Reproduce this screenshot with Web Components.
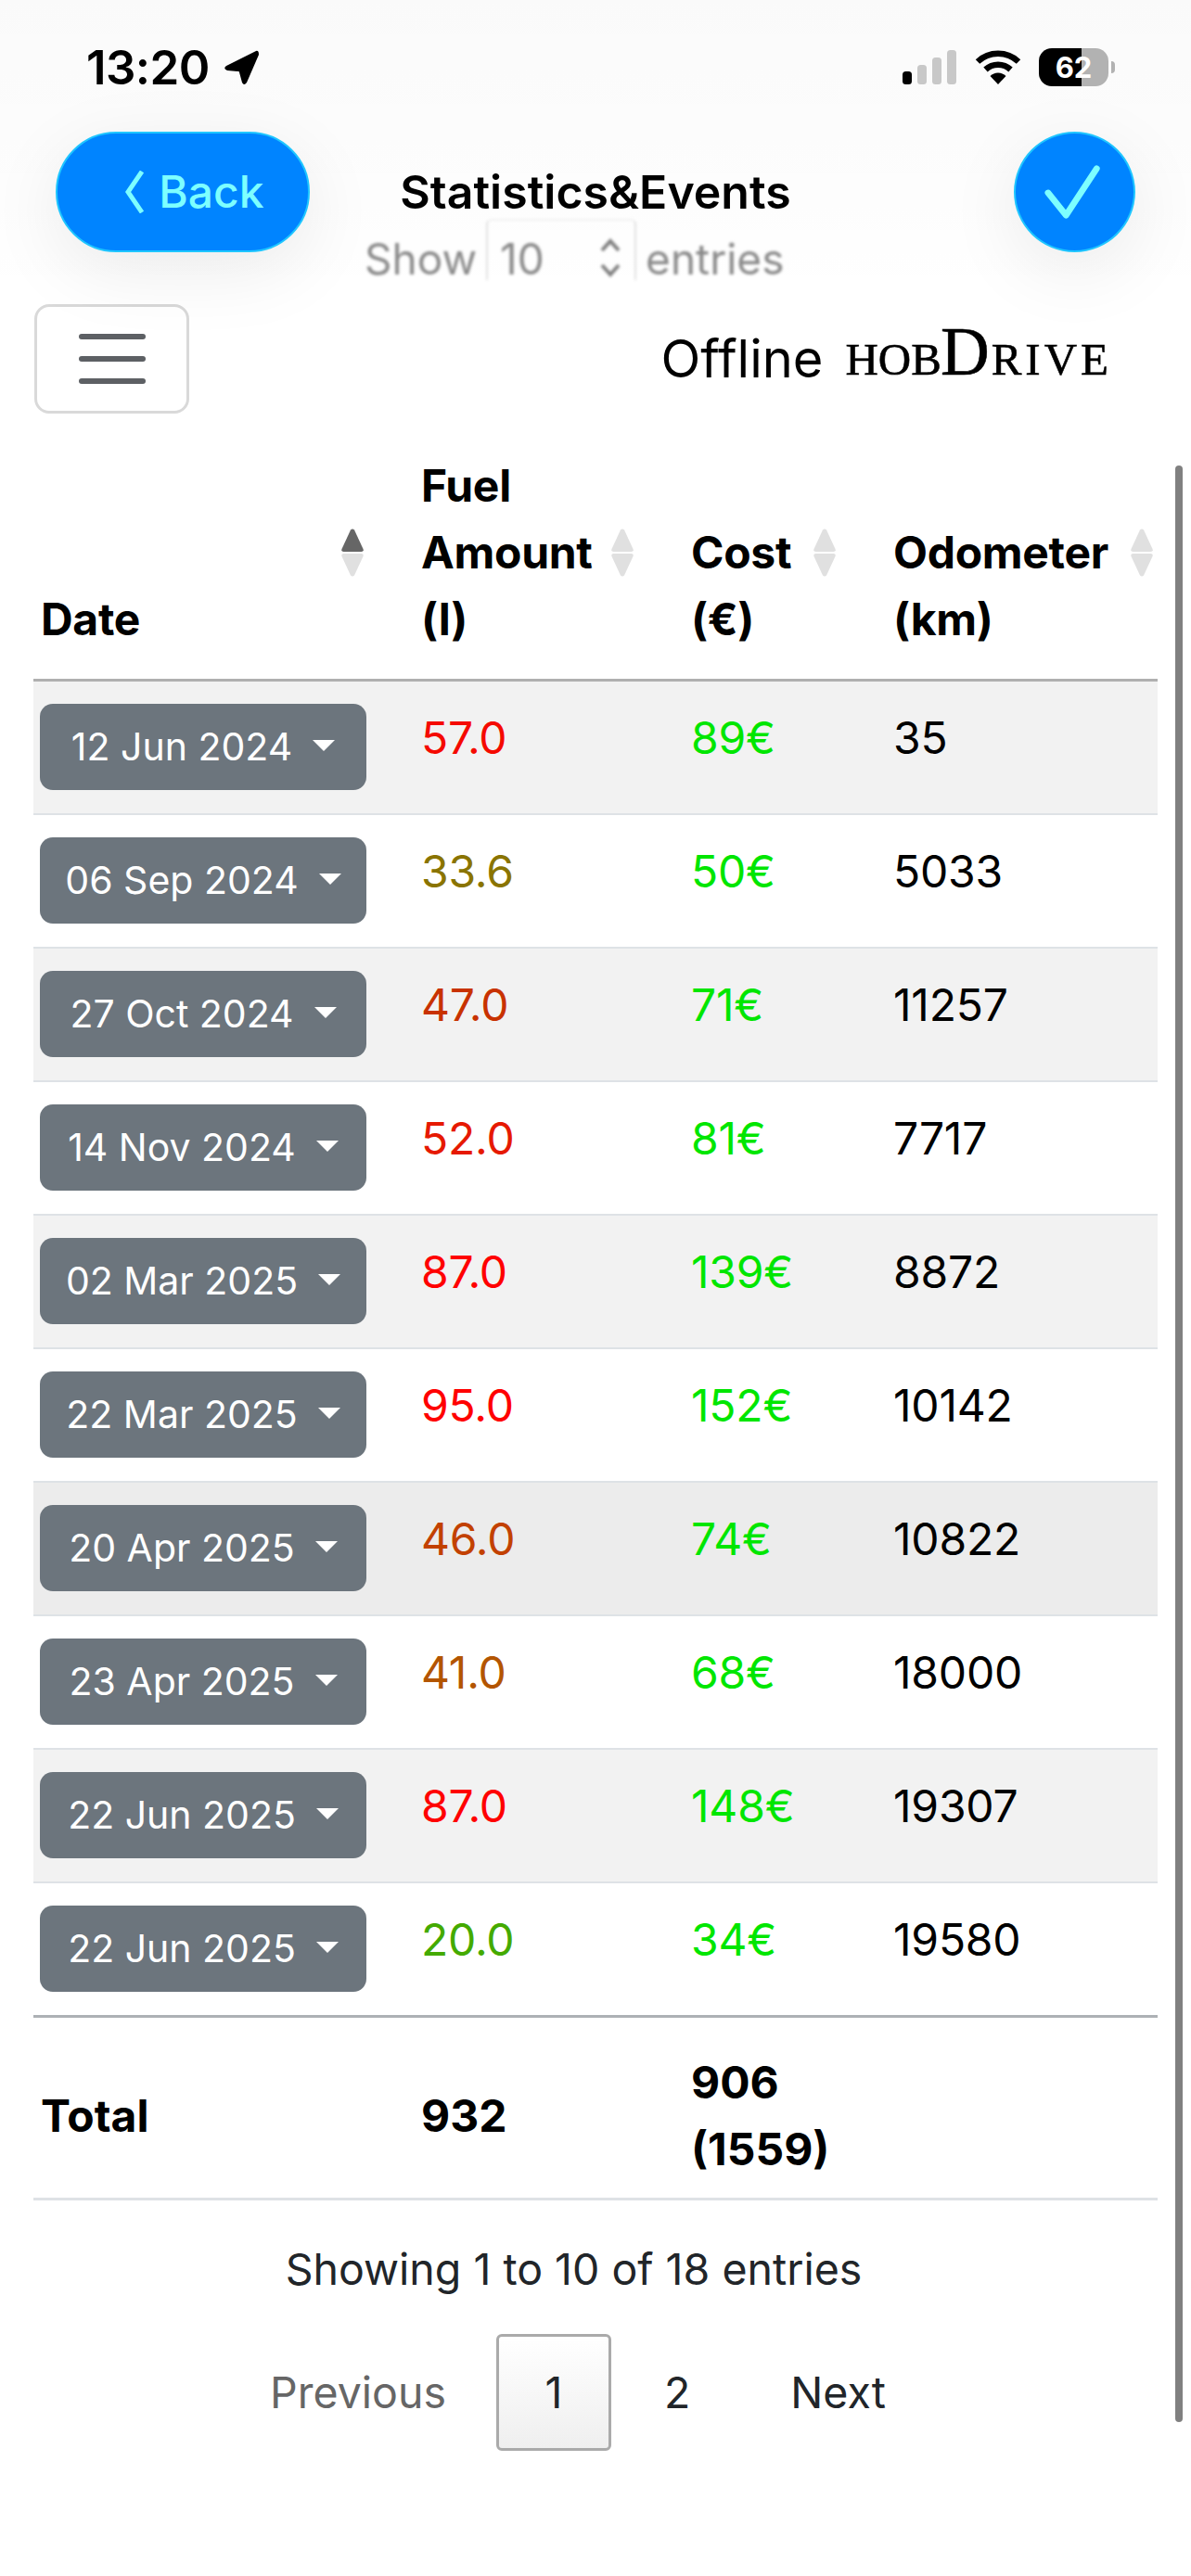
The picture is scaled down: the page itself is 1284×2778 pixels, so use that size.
<!DOCTYPE html>
<html lang="en">
<head>
<meta charset="utf-8">
<title>Statistics&amp;Events</title>
<style>
  html, body { margin: 0; padding: 0; background: #fff; }
  body { font-family: Inter, "Liberation Sans", sans-serif; color: #000; }
</style>
</head>
<body>
<hd-page>
  <top-bar slot="overlay"></top-bar>
  <length-control></length-control>
  <tool-bar></tool-bar>
  <fuel-table>
    <table-head></table-head>
    <fuel-row date="12 Jun 2024" fuel="57.0" color="#f50a00" cost="89€" odo="35" bg="#f2f2f2"></fuel-row>
    <fuel-row date="06 Sep 2024" fuel="33.6" color="#8a7400" cost="50€" odo="5033"></fuel-row>
    <fuel-row date="27 Oct 2024" fuel="47.0" color="#c83200" cost="71€" odo="11257" bg="#f2f2f2"></fuel-row>
    <fuel-row date="14 Nov 2024" fuel="52.0" color="#e61900" cost="81€" odo="7717"></fuel-row>
    <fuel-row date="02 Mar 2025" fuel="87.0" color="#ff0000" cost="139€" odo="8872" bg="#f2f2f2"></fuel-row>
    <fuel-row date="22 Mar 2025" fuel="95.0" color="#ff0000" cost="152€" odo="10142"></fuel-row>
    <fuel-row date="20 Apr 2025" fuel="46.0" color="#c24100" cost="74€" odo="10822" bg="#ececec"></fuel-row>
    <fuel-row date="23 Apr 2025" fuel="41.0" color="#b35500" cost="68€" odo="18000"></fuel-row>
    <fuel-row date="22 Jun 2025" fuel="87.0" color="#ff0000" cost="148€" odo="19307" bg="#f2f2f2"></fuel-row>
    <fuel-row date="22 Jun 2025" fuel="20.0" color="#44aa00" cost="34€" odo="19580"></fuel-row>
    <table-foot></table-foot>
  </fuel-table>
  <table-info></table-info>
  <page-nav></page-nav>
</hd-page>

<script>
const COLUMNS = '410px 291px 218px 293px';

class HdPage extends HTMLElement {
  constructor() {
    super();
    this.attachShadow({ mode: 'open' });
    this.shadowRoot.innerHTML = `
      <style>
        :host { display: block; position: relative; width: 1284px; height: 2778px; overflow: hidden; background: #fff; box-sizing: border-box; padding: 236px 36px 0; }
        .scroll { position: absolute; left: 1267px; top: 502px; width: 8px; height: 2110px; border-radius: 4px; background: #808080; }
      </style>
      <slot name="overlay"></slot>
      <slot></slot>
      <div class="scroll"></div>
    `;
  }
}

class TopBar extends HTMLElement {
  constructor() {
    super();
    this.attachShadow({ mode: 'open' });
    this.shadowRoot.innerHTML = `
      <style>
        :host { display: block; position: absolute; z-index: 2; left: 0; top: 0; width: 1284px; height: 320px; pointer-events: none; background: linear-gradient(rgba(0,0,0,.018), rgba(0,0,0,.006) 70%, rgba(0,0,0,0)); }
        .status { display: flex; align-items: center; height: 41px; margin-top: 52px; padding: 0 82px 0 93px; position: absolute; top: 0; left: 0; right: 0; }
        .time { font: 600 51px/41px Inter, sans-serif; letter-spacing: -.6px; color: #000; }
        .loc { margin-left: 15px; }
        .right { margin-left: auto; display: flex; align-items: center; }
        .wifi { margin: 0 19px 0 20px; }
        .batt { position: relative; width: 75px; height: 41px; border-radius: 14px; overflow: hidden; background: linear-gradient(90deg,#000 0 46px,#b2b2b2 46px); color: #fff; font: 700 31px/41px Inter, sans-serif; text-align: center; }
        .nub { width: 4px; height: 13px; margin-left: 3px; border-radius: 0 4px 4px 0; background: #b2b2b2; }
        nav { position: absolute; left: 60px; right: 60px; top: 142px; display: grid; grid-template-columns: 1fr auto 1fr; align-items: center; }
        .back { justify-self: start; box-sizing: border-box; width: 274px; height: 130px; border-radius: 65px / 65px; background: #0084ff; border: 2px solid #1fc6ff; box-shadow: 0 20px 80px rgba(0,0,0,.08); display: flex; align-items: center; justify-content: center; gap: 16px; padding-left: 26px; color: #7dffff; font: 500 48px/1 Inter, sans-serif; }
        .title { font: 600 50px/1 Inter, sans-serif; color: #000; }
        .ok { justify-self: end; box-sizing: border-box; width: 131px; height: 130px; border-radius: 50%; background: #0084ff; border: 2px solid #1fc6ff; box-shadow: 0 20px 80px rgba(0,0,0,.08); display: flex; align-items: center; justify-content: center; }
      </style>
      <div class="status">
        <span class="time">13:20</span>
        <svg class="loc" width="38" height="38" viewBox="0 0 38 38"><path d="M35 1 L3 17 Q-1 20 4 22 L16 23 Q17 23 17 24 L20 35 Q22 39 25 35 L38 5 Q38 0 35 1 Z" fill="#000"/></svg>
        <div class="right">
          <svg width="58" height="37" viewBox="0 0 58 37">
            <rect x="0" y="23" width="10" height="14" rx="3.5" fill="#000"/>
            <rect x="16" y="16" width="10" height="21" rx="3.5" fill="#c8c8c8"/>
            <rect x="32" y="8" width="10" height="29" rx="3.5" fill="#c8c8c8"/>
            <rect x="48" y="0" width="10" height="37" rx="3.5" fill="#c8c8c8"/>
          </svg>
          <svg class="wifi" width="50" height="37" viewBox="0 0 50 37">
            <path d="M3 12.5 A32 32 0 0 1 47 12.5" fill="none" stroke="#000" stroke-width="6.5"/>
            <path d="M11.5 21 A20 20 0 0 1 38.5 21" fill="none" stroke="#000" stroke-width="6.5"/>
            <path d="M25 37 L16.5 28 A12 12 0 0 1 33.5 28 Z" fill="#000"/>
          </svg>
          <div class="batt">62</div>
          <div class="nub"></div>
        </div>
      </div>
      <nav>
        <div class="back">
          <svg width="20" height="46" viewBox="0 0 20 46"><path d="M18 1 L3 23 L18 45" fill="none" stroke="#7dffff" stroke-width="5"/></svg>
          <span>Back</span>
        </div>
        <div class="title">Statistics&amp;Events</div>
        <div class="ok">
          <svg width="131" height="130" viewBox="0 0 131 130"><path d="M38 68 L58 93 L92 41" transform="translate(-2,-2)" fill="none" stroke="#7dffff" stroke-width="7" stroke-linecap="round" stroke-linejoin="round"/></svg>
        </div>
      </nav>
    `;
  }
}

class LengthControl extends HTMLElement {
  constructor() {
    super();
    this.attachShadow({ mode: 'open' });
    this.shadowRoot.innerHTML = `
      <style>
        :host { display: flex; align-items: flex-end; box-sizing: border-box; height: 66px; margin-left: 357px; width: 480px; gap: 10px; filter: blur(1.6px); color: #8a8a8a; font: 400 46px/46px Inter, sans-serif; }
        .sel { box-sizing: border-box; width: 162px; height: 66px; border: solid #e2e2e2; border-width: 2px 2px 0 2px; border-top-color: #f2f2f2; border-radius: 6px 6px 0 0; padding-left: 13px; display: flex; align-items: flex-end; justify-content: space-between; }
        svg { margin: 0 14px 2px 0; }
      </style>
      <span>Show</span>
      <div class="sel">
        <span>10</span>
        <svg width="24" height="44" viewBox="0 0 24 44"><path d="M3 14 L12 4 L21 14 M3 30 L12 40 L21 30" fill="none" stroke="#808080" stroke-width="4"/></svg>
      </div>
      <span>entries</span>
    `;
  }
}

class ToolBar extends HTMLElement {
  constructor() {
    super();
    this.attachShadow({ mode: 'open' });
    this.shadowRoot.innerHTML = `
      <style>
        :host { display: flex; align-items: center; height: 118px; margin-top: 26px; }
        .menu { box-sizing: border-box; width: 167px; height: 118px; margin-left: 1px; border: 3px solid #d9d9d9; border-radius: 16px; background: #fff; display: flex; flex-direction: column; align-items: center; justify-content: center; gap: 18px; }
        .menu i { display: block; width: 72px; height: 6px; border-radius: 3px; background: #5d6064; }
        .off { margin-left: auto; font: 400 56px/1 Inter, sans-serif; color: #000; }
        .logo { margin: 0 49px 0 24px; font-family: "Liberation Serif", serif; font-size: 49px; line-height: 1; color: #000; white-space: nowrap; -webkit-text-stroke: .6px #000; }
        .logo b { font-weight: 400; font-size: 73px; line-height: 0; margin: 0 2px 0 -1px; }
        .logo span { letter-spacing: 4px; }
      </style>
      <div class="menu"><i></i><i></i><i></i></div>
      <div class="off">Offline</div>
      <div class="logo">HOB<b>D</b><span>RIVE</span></div>
    `;
  }
}

class FuelTable extends HTMLElement {
  constructor() {
    super();
    this.attachShadow({ mode: 'open' });
    this.shadowRoot.innerHTML = `
      <style>:host { display: block; width: 1212px; margin-top: 42px; font: 380 48px/72px Inter, sans-serif; }</style>
      <slot></slot>
    `;
  }
}

class SortArrows extends HTMLElement {
  constructor() {
    super();
    this.attachShadow({ mode: 'open' });
    const up = this.hasAttribute('active') ? '#666' : '#e0e0e0';
    this.shadowRoot.innerHTML = `
      <style>:host { display: block; width: 24px; height: 52px; line-height: 0; }</style>
      <svg width="24" height="52" viewBox="0 0 24 52">
        <path d="M10 1.5 Q12 -0.5 14 1.5 L23.5 22 Q24.5 25 21.5 25 L2.5 25 Q-0.5 25 0.5 22 Z" fill="${up}"/>
        <path d="M10 50.5 Q12 52.5 14 50.5 L23.5 30 Q24.5 27 21.5 27 L2.5 27 Q-0.5 27 0.5 30 Z" fill="#e0e0e0"/>
      </svg>
    `;
  }
}

class TableHead extends HTMLElement {
  constructor() {
    super();
    this.attachShadow({ mode: 'open' });
    this.shadowRoot.innerHTML = `
      <style>
        :host { display: grid; grid-template-columns: ${COLUMNS}; box-sizing: border-box; height: 247px; padding-bottom: 31px; border-bottom: 3px solid #b0b0b0; font-weight: 700; line-height: 72px; letter-spacing: -.3px; }
        .th { display: flex; align-items: flex-end; justify-content: space-between; padding: 0 54px 0 8px; }
        .th:last-child { padding-right: 5px; }
        sort-arrows { align-self: center; }
      </style>
      <div class="th"><span>Date</span><sort-arrows active></sort-arrows></div>
      <div class="th"><span>Fuel<br>Amount<br>(l)</span><sort-arrows></sort-arrows></div>
      <div class="th"><span>Cost<br>(€)</span><sort-arrows></sort-arrows></div>
      <div class="th"><span>Odometer<br>(km)</span><sort-arrows></sort-arrows></div>
    `;
  }
}

class DateButton extends HTMLElement {
  constructor() {
    super();
    this.attachShadow({ mode: 'open' });
    this.shadowRoot.innerHTML = `
      <style>
        :host { display: flex; align-items: center; justify-content: center; box-sizing: border-box; width: 352px; height: 93px; margin: 24px 0 0 7px; border-radius: 14px; background: #6c757d; color: #fff; font: 380 41px/1 Inter, sans-serif; }
        i { width: 0; height: 0; margin-left: 22px; margin-top: -4px; border-top: 12px solid #fff; border-left: 12px solid transparent; border-right: 12px solid transparent; }
      </style>
      <span><slot></slot></span><i></i>
    `;
  }
}

class FuelRow extends HTMLElement {
  constructor() {
    super();
    this.attachShadow({ mode: 'open' });
    const a = n => this.getAttribute(n) || '';
    this.shadowRoot.innerHTML = `
      <style>
        :host { display: grid; grid-template-columns: ${COLUMNS}; box-sizing: border-box; height: 144px; border-bottom: 2px solid #dee2e6; background: ${a('bg') || '#fff'}; }
        .td { padding: 25px 8px 0; letter-spacing: -.2px; }
        .fuel { color: ${a('color')}; }
        .cost { color: #00e600; }
      </style>
      <div><date-button>${a('date')}</date-button></div>
      <div class="td fuel">${a('fuel')}</div>
      <div class="td cost">${a('cost')}</div>
      <div class="td">${a('odo')}</div>
    `;
  }
}

class TableFoot extends HTMLElement {
  constructor() {
    super();
    this.attachShadow({ mode: 'open' });
    this.shadowRoot.innerHTML = `
      <style>
        :host { display: grid; grid-template-columns: ${COLUMNS}; align-items: center; box-sizing: border-box; height: 200px; padding: 34px 0 19px; border-top: 3px solid #adb1b5; border-bottom: 3px solid #dee2e6; font-weight: 700; margin-top: -2px; }
        div { padding: 0 8px; }
      </style>
      <div>Total</div><div>932</div><div>906<br>(1559)</div><div></div>
    `;
  }
}

class TableInfo extends HTMLElement {
  constructor() {
    super();
    this.attachShadow({ mode: 'open' });
    this.shadowRoot.innerHTML = `
      <style>:host { display: block; width: 1165px; margin-top: 38px; text-align: center; color: #212529; font: 380 46.5px/72px Inter, sans-serif; }</style>
      Showing 1 to 10 of 18 entries
    `;
  }
}

class PageNav extends HTMLElement {
  constructor() {
    super();
    this.attachShadow({ mode: 'open' });
    this.shadowRoot.innerHTML = `
      <style>
        :host { display: flex; justify-content: flex-start; align-items: center; margin: 34px 0 0 207px; height: 126px; color: #212529; font: 380 46.5px/1 Inter, sans-serif; }
        span { padding: 0 48px; }
        .prev { color: #666; margin-right: 6px; }
        .cur { box-sizing: border-box; width: 124px; height: 126px; padding: 0; display: flex; align-items: center; justify-content: center; border: 3px solid #aaa; border-radius: 6px; background: linear-gradient(#fff,#efefef); margin-right: 9px; }
        .next { margin-left: 12px; }
      </style>
      <span class="prev">Previous</span><span class="cur">1</span><span>2</span><span class="next">Next</span>
    `;
  }
}

customElements.define('hd-page', HdPage);
customElements.define('top-bar', TopBar);
customElements.define('length-control', LengthControl);
customElements.define('tool-bar', ToolBar);
customElements.define('sort-arrows', SortArrows);
customElements.define('table-head', TableHead);
customElements.define('date-button', DateButton);
customElements.define('fuel-row', FuelRow);
customElements.define('table-foot', TableFoot);
customElements.define('fuel-table', FuelTable);
customElements.define('table-info', TableInfo);
customElements.define('page-nav', PageNav);
</script>
</body>
</html>
